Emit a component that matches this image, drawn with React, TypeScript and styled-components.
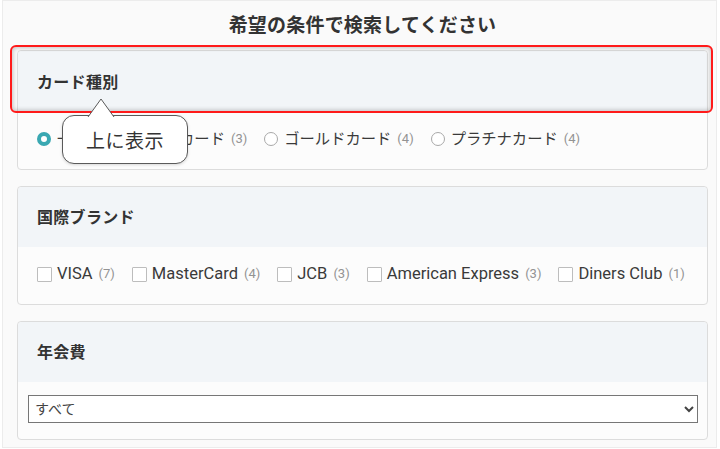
import React from 'react';
import styled, { createGlobalStyle } from 'styled-components';

const GlobalStyle = createGlobalStyle`
  html, body {
    margin: 0;
    padding: 0;
    background: #ffffff;
  }
  body {
    font-family: Roboto, "Noto Sans CJK JP", "Noto Sans", sans-serif;
    color: #333333;
  }
  * {
    box-sizing: border-box;
  }
`;

const Frame = styled.div`
  margin: 0 3px 0 2px;
  height: 448px;
  border: 1px solid #ececec;
  background: #fafafa;
  padding: 0 8px 0 14px;
`;

const Title = styled.h1`
  margin: 0;
  padding: 10px 0 10px;
  font-size: 19px;
  line-height: 29px;
  font-weight: 700;
  text-align: center;
  color: #333333;
  letter-spacing: 0.2px;
`;

const Stack = styled.div`
  display: flex;
  flex-direction: column;
  gap: 16px;
`;

const Card = styled.section`
  border: 1px solid #dcdcdc;
  border-radius: 4px;
  background: #fcfcfc;
`;

const CardHeader = styled.div<{ $tall?: boolean }>`
  position: relative;
  height: ${(p) => (p.$tall ? 61 : 60)}px;
  padding: 0 19px 2px;
  display: flex;
  align-items: center;
  background: #f2f5f8;
  border-radius: 4px 4px 0 0;
  font-size: 16px;
  font-weight: 700;
  color: #333333;
  letter-spacing: 0.3px;
`;

const Highlight = styled.div`
  position: absolute;
  top: -6px;
  left: -8px;
  right: -6px;
  bottom: -1px;
  border: 2px solid #ff1a1a;
  border-radius: 6px;
  box-shadow: inset 0 0 4px 1px rgba(0, 0, 0, 0.22);
  pointer-events: none;
`;

const Bubble = styled.div`
  position: absolute;
  top: 64px;
  left: 44px;
  width: 126px;
  height: 49px;
  display: flex;
  align-items: center;
  justify-content: center;
  background: #ffffff;
  border: 1px solid #5a5a5a;
  border-radius: 12px;
  box-shadow: 0 1px 3px rgba(0, 0, 0, 0.15);
  font-size: 19px;
  font-weight: 400;
  color: #333333;
  letter-spacing: 0.5px;
  z-index: 2;
`;

const Pointer = styled.svg`
  position: absolute;
  top: -18px;
  left: 25px;
  width: 26px;
  height: 19px;
  overflow: visible;
`;

const CardBody = styled.div<{ $tight?: boolean }>`
  padding: ${(p) => (p.$tight ? '13px 9px 15px 10px' : '14px 19px 17px')};
  display: flex;
  align-items: flex-start;
  min-height: 57px;
`;

const OptionRow = styled.div<{ $gap: number }>`
  display: flex;
  align-items: center;
  gap: ${(p) => p.$gap}px;
`;

const Option = styled.label<{ $size: number }>`
  display: flex;
  align-items: center;
  font-size: ${(p) => p.$size}px;
  line-height: 26px;
  color: #3a3a3a;
  white-space: nowrap;
`;

const Radio = styled.span<{ $checked?: boolean }>`
  width: 14px;
  height: 14px;
  border-radius: 50%;
  margin-right: 6px;
  flex: none;
  background: #ffffff;
  border: ${(p) => (p.$checked ? '4px solid #3aa8b2' : '1px solid #a9a9a9')};
`;

const Box = styled.span`
  width: 15px;
  height: 15px;
  margin-right: 5px;
  flex: none;
  background: #ffffff;
  border: 1px solid #bdbdbd;
  border-radius: 1px;
`;

const Count = styled.span`
  margin-left: 6px;
  font-size: 13px;
  color: #939393;
`;

const Select = styled.select`
  width: 100%;
  height: 28px;
  border: 1px solid #767676;
  border-radius: 0;
  background: #ffffff;
  font-family: Roboto, "Noto Sans CJK JP", sans-serif;
  font-size: 14px;
  color: #444444;
  padding: 0 2px;
`;

const cardTypes = [
  { label: '一般・クラシックカード', count: 3, checked: true },
  { label: 'ゴールドカード', count: 4 },
  { label: 'プラチナカード', count: 4 },
];

const brands = [
  { label: 'VISA', count: 7 },
  { label: 'MasterCard', count: 4 },
  { label: 'JCB', count: 3 },
  { label: 'American Express', count: 3 },
  { label: 'Diners Club', count: 1 },
];

export default function App() {
  return (
    <>
      <GlobalStyle />
      <Frame>
        <Title>希望の条件で検索してください</Title>
        <Stack>
          <Card>
            <CardHeader $tall>
              カード種別
              <Highlight />
              <Bubble>
                <Pointer viewBox="0 0 26 19">
                  <path d="M0 19 L13 1 L26 19" fill="#ffffff" stroke="#5a5a5a" strokeWidth="1" />
                  <rect x="1" y="18" width="24" height="3" fill="#ffffff" />
                </Pointer>
                上に表示
              </Bubble>
            </CardHeader>
            <CardBody>
              <OptionRow $gap={17}>
                {cardTypes.map((t) => (
                  <Option key={t.label} $size={15.3}>
                    <Radio $checked={t.checked} />
                    {t.label}
                    <Count>({t.count})</Count>
                  </Option>
                ))}
              </OptionRow>
            </CardBody>
          </Card>

          <Card>
            <CardHeader>国際ブランド</CardHeader>
            <CardBody>
              <OptionRow $gap={17}>
                {brands.map((b) => (
                  <Option key={b.label} $size={16.5}>
                    <Box />
                    {b.label}
                    <Count>({b.count})</Count>
                  </Option>
                ))}
              </OptionRow>
            </CardBody>
          </Card>

          <Card>
            <CardHeader>年会費</CardHeader>
            <CardBody $tight>
              <Select defaultValue="all">
                <option value="all">すべて</option>
                <option value="free">無料</option>
              </Select>
            </CardBody>
          </Card>
        </Stack>
      </Frame>
    </>
  );
}
